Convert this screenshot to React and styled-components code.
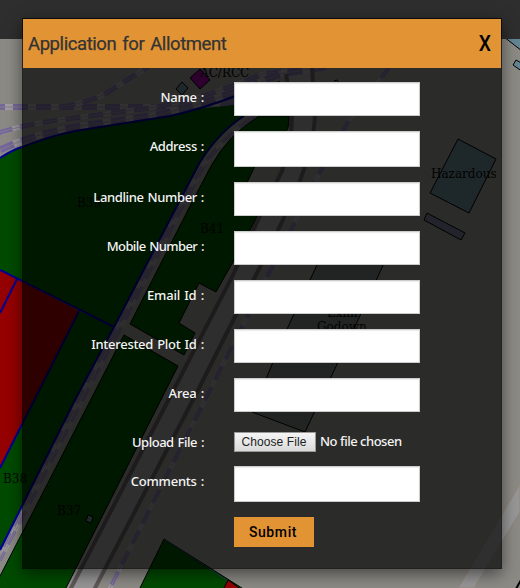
import React from 'react';
import styled, { createGlobalStyle } from 'styled-components';

const GlobalStyle = createGlobalStyle`
  * { box-sizing: border-box; }
  body { margin: 0; overflow: hidden; background: #8b8a85; }
`;

const Screen = styled.main`
  display: grid;
  grid-template: 588px / 520px;
  overflow: hidden;
  > * { grid-area: 1 / 1; }
`;

const MapCanvas = styled.svg`
  display: block;
  width: 520px;
  height: 588px;
  text { font: 12px "DejaVu Serif", serif; fill: #080808; }
`;

const Dialog = styled.section`
  z-index: 1;
  width: 480px;
  height: 551px;
  margin: 18px 0 0 22px;
  display: flex;
  flex-direction: column;
  background: rgba(0, 0, 0, 0.69);
  background-clip: padding-box;
  border: 1px solid rgba(0, 0, 0, 0.76);
  box-shadow: 0 5px 15px rgba(0, 0, 0, 0.5);
  font: 500 13px "Noto Sans", sans-serif;
  color: #f4f4f4;
`;

const Header = styled.header`
  display: flex;
  justify-content: space-between;
  align-items: center;
  flex: 0 0 49px;
  padding: 0 10px 0 5px;
  background: #e29333;
`;

const Title = styled.h1`
  margin: 0;
  font: 400 18.5px/48px Roboto, sans-serif;
  letter-spacing: -0.42px;
  word-spacing: 1.8px;
  color: #333;
  -webkit-text-stroke: 0.25px #333;
`;

const Close = styled.button`
  padding: 0;
  border: 0;
  background: none;
  font: 500 22px/48px Roboto, sans-serif;
  color: #000;
  transform: scaleX(0.88);
  transform-origin: right;
`;

const Form = styled.form`
  display: flex;
  flex-direction: column;
  gap: 15px;
  padding-top: 14px;
`;

const Row = styled.div`
  display: grid;
  grid-template-columns: 181px 186px;
  column-gap: 30px;
  height: ${({ $height }) => $height}px;
`;

const Label = styled.label`
  text-align: right;
  line-height: 18px;
  padding-top: 6px;
  letter-spacing: ${({ $tracking }) => $tracking}px;
  word-spacing: 1px;
  white-space: pre;
`;

const Input = styled.input`
  width: 186px;
  height: 100%;
  padding: 6px 8px;
  border: 1px solid #ccc;
  border-radius: 0;
  background: #fff;
  box-shadow: inset 0 1px 1px rgba(0, 0, 0, 0.08);
`;

const FilePicker = styled.div`
  display: flex;
  align-items: center;
  gap: 4px;
  height: 20px;
  margin-top: 5px;
  white-space: nowrap;
`;

const FileButton = styled.button`
  width: 82px;
  height: 20px;
  padding: 0 2px 0 0;
  border: 1px solid #999;
  background: linear-gradient(#f5f5f5, #dadada);
  font: 12px "Liberation Sans", Arial, sans-serif;
  letter-spacing: 0.1px;
  color: #222;
`;

const FileStatus = styled.span`
  letter-spacing: -0.48px;
  line-height: 18px;
  transform: translateY(-1px);
`;

const Submit = styled.button`
  width: 80px;
  height: 30px;
  margin-left: 211px;
  padding: 0 2px 0 0;
  border: 0;
  background: #e29333;
  font: 500 14px Roboto, sans-serif;
  letter-spacing: 0.6px;
  color: #000;
`;

const fields = [
  { name: 'Name', height: 34, tracking: -0.3 },
  { name: 'Address', height: 36, tracking: -0.4 },
  { name: 'Landline Number', height: 34, tracking: -0.38 },
  { name: 'Mobile Number', height: 34, tracking: -0.6 },
  { name: 'Email Id', height: 34, tracking: -0.2 },
  { name: 'Interested Plot Id', height: 34, tracking: -0.28 },
  { name: 'Area', height: 34, tracking: -0.2 },
  { name: 'Upload File', height: 24, tracking: -0.48, file: true },
  { name: 'Comments', height: 36, tracking: -0.25 },
];

const tracks = [
  { d: 'M-10 107 H150 Q205 107 250 99', width: 6 },
  { d: 'M60 107 Q92 102 110 91 Q128 79 148 67', width: 5 },
  { d: 'M-2 133 Q22 125 60 120 L150 108 Q205 99 262 74 L330 66', width: 5 },
  { d: 'M0 150 Q30 135 80 126 L150 116 Q205 106 280 74 L325 67', width: 7 },
  { d: 'M255 116 Q222 139 204 166 L180 212 L122 326 L85 396 L0 561', width: 3 },
  { d: 'M251 118 Q218 142 200 170 L177 211 L118 326 L82 392 L0 553', width: 3 },
  { d: 'M390 66 L349 120 L319 174 L293 226 L269 273 L247 317 L208 394 L109 590', width: 4 },
];

function PlotMap() {
  return (
    <MapCanvas viewBox="0 0 520 588" aria-hidden="true">
      <rect width="520" height="588" fill="#8b8a85" />
      <path d="M283 60 L293 110 Q293 140 282 171 L258 220 L233 270 L170 397 L65 588 H94 L197 392 L260 267 L281 224 L301 178 Q317 140 315 108 L309 60Z" fill="#969696" />
      <path d="M520 484 L458 588 H474 L520 512Z" fill="#979797" stroke="#93877c" />

      <path d="M0 158 Q12 150 22 147 Q50 136 75 131 L170 116 Q205 108 238 95 L289 82 V116 L244 116 Q219 132 200 162 L177 206 L114 327 L0 270Z" fill="#004b00" />
      <path d="M259 116 H289 Q290 131 282 136 L254 168 L243 191 L262 202 L257 217 L234 260 L216 292 L199 283 L179 323 L195 333 L184 355 L130 324 L190 206 L211 166 Q229 134 259 116Z" fill="#004b00" stroke="#000" />
      <path d="M79 311 L114 327 L76 398 L0 550 V468Z" fill="#004b00" />
      <path d="M124 335 L178 366 L65 590 H-2 V580Z" fill="#004b00" stroke="#000" />
      <path d="M0 270 L79 311 L0 468Z" fill="#960000" />
      <path d="M164 539 L139 590 H245Z" fill="#004b00" stroke="#000" />
      <path d="M164 539 L242 590" fill="none" stroke="#203d4d" />
      <path d="M228 580 L223 590 H242Z" fill="#960000" stroke="#000" />

      <g fill="none">
        {tracks.map(({ d, width }) => (
          <g key={d} strokeWidth={width}>
            <path d={d} stroke="#a09da3" />
            <path d={d} stroke="#75679a" strokeDasharray="15 8" />
            <path d={d} stroke="#85808e" strokeWidth="1" />
          </g>
        ))}
      </g>

      <g fill="none" stroke="#000096" strokeWidth="2">
        <path d="M0 158 Q12 150 22 147 Q50 136 75 131 L170 116 Q205 108 238 95 L280 82" />
        <path d="M244 116 Q219 132 200 162 L177 206 L114 327 L76 398 L0 550" />
        <path d="M0 270 L114 327 M79 311 L0 468 M17 279 L0 313" />
      </g>
      <g fill="none" stroke="#5f5858" strokeWidth="4">
        <path d="M286 74 L292 110 Q293 140 282 171 L258 220 L233 275 L170 397 L70 590" />
        <path d="M312 68 L315 115 Q314 142 301 178 L281 224 L260 267 L197 392 L94 590" />
      </g>

      <g stroke="#000">
        <path d="M325 248 H391 L358 320 L305 432 L252 412 L287 329Z" fill="#6b7471" />
        <path d="M458 139 L496 159 L469 213 L430 193Z" fill="#637d88" />
        <path d="M427 213 L465 233 L461 240 L424 220Z" fill="#72738a" />
        <path d="M200 69 L210 80 L200 89 L190 78Z" fill="#930090" />
        <path d="M182 82 L188 88 L182 95 L176 89Z M88 515 L93 517 L91 523 L86 521Z" fill="#637d88" />
        <path d="M334 81 L337 80 L340 85" fill="none" />
        <path d="M504 37 L522 51 V37Z M516 60 L513 65 L523 72 V64Z" fill="#638593" />
        <path d="M521 580 L516 589" strokeWidth="2" />
      </g>
      <text x="200" y="77">AC/RCC</text>
      <text x="77" y="207">B39</text>
      <text x="200" y="233">B41</text>
      <text x="431" y="178">Hazardous</text>
      <text x="327" y="317">Exim</text>
      <text x="317" y="331">Godown</text>
      <text x="3" y="483">B38</text>
      <text x="57" y="515">B37</text>
      <rect width="520" height="39" fill="#2e2e2e" />
    </MapCanvas>
  );
}

export default function App() {
  return (
    <>
      <GlobalStyle />
      <Screen>
        <PlotMap />
        <Dialog role="dialog" aria-labelledby="dialog-title">
          <Header>
            <Title id="dialog-title">Application for Allotment</Title>
            <Close type="button">X</Close>
          </Header>
          <Form onSubmit={(event) => event.preventDefault()}>
            {fields.map(({ name, height, tracking, file }) => (
              <Row key={name} $height={height}>
                <Label htmlFor={name} $tracking={tracking}>{name} :</Label>
                {file ? (
                  <FilePicker>
                    <FileButton id={name} type="button">Choose File</FileButton>
                    <FileStatus>No file chosen</FileStatus>
                  </FilePicker>
                ) : <Input id={name} />}
              </Row>
            ))}
            <Submit type="submit">Submit</Submit>
          </Form>
        </Dialog>
      </Screen>
    </>
  );
}
